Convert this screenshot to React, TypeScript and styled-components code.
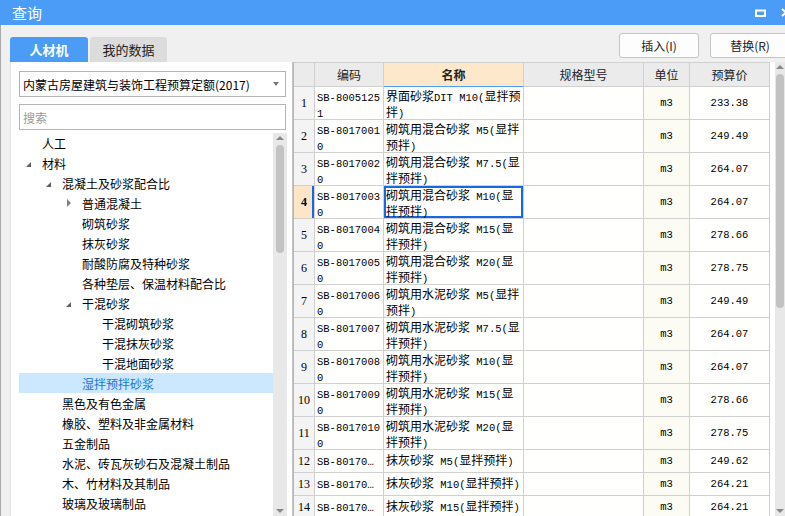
import React from "react";
import styled, { createGlobalStyle, css } from "styled-components";

const Global = createGlobalStyle`
  html, body { margin: 0; padding: 0; background: #f0f0f0; overflow: hidden; }
  body {
    font-family: "Noto Sans CJK SC", "Noto Sans", sans-serif;
    font-size: 12px;
    color: #000;
  }
  * { box-sizing: border-box; }
`;

const BLUE = "#4a9cf6";

const Window = styled.div`
  width: 785px;
  height: 516px;
  display: flex;
  flex-direction: column;
  overflow: hidden;
  background: #f0f0f0;
`;

const TitleBar = styled.div`
  height: 25px;
  flex: none;
  background: ${BLUE};
  display: flex;
  align-items: center;
  padding-left: 12px;
  color: #fff;
  font-size: 15px;
`;

const TitleText = styled.span`
  flex: 1;
  line-height: 25px;
`;

const WinButtons = styled.div`
  display: flex;
  align-items: center;
  gap: 15px;
  margin-right: -6px;
  height: 100%;
`;

const Content = styled.div`
  flex: 1;
  min-height: 0;
  display: flex;
  flex-direction: column;
  border-left: 1px solid #a8a8a8;
`;

const Toolbar = styled.div`
  height: 37px;
  flex: none;
  display: flex;
  padding-left: 9px;
`;

const Tabs = styled.div`
  display: flex;
  align-self: flex-end;
  gap: 2px;
`;

const Tab = styled.div<{ $active?: boolean }>`
  width: ${(p) => (p.$active ? 78 : 77)}px;
  height: 25px;
  border-radius: 3px 3px 0 0;
  display: flex;
  align-items: center;
  justify-content: center;
  font-size: 13px;
  ${(p) =>
    p.$active
      ? css`
          background: ${BLUE};
          color: #fff;
          font-weight: bold;
        `
      : css`
          background: #dcdcdc;
          color: #222;
        `}
`;

const Actions = styled.div`
  margin-left: auto;
  margin-top: 8px;
  margin-right: -5px;
  display: flex;
  gap: 11px;
  align-self: flex-start;
`;

const ActionButton = styled.button`
  width: 80px;
  height: 25px;
  border: 1px solid #c4c4c4;
  border-radius: 3px;
  background: #fdfdfd;
  font-family: "Noto Sans CJK SC", sans-serif;
  font-size: 12px;
  color: #222;
  padding: 0;
`;

const Body = styled.div`
  flex: 1;
  min-height: 0;
  display: flex;
  padding-left: 9px;
`;

const LeftPanel = styled.div`
  width: 283px;
  flex: none;
  background: #fff;
  border-right: 1px solid #c4c4c4;
  border-left: 1px solid #e2e2e2;
  padding: 9px 6px 0 8px;
  display: flex;
  flex-direction: column;
`;

const Select = styled.div`
  height: 26px;
  border: 1px solid #b4b4b4;
  display: flex;
  align-items: center;
  padding: 0 6px 0 3px;
  font-size: 12px;
`;

const SelectText = styled.span`
  flex: 1;
  white-space: nowrap;
`;

const Caret = styled.span`
  width: 0;
  height: 0;
  border-left: 3px solid transparent;
  border-right: 3px solid transparent;
  border-top: 4px solid #777;
`;

const Search = styled.div`
  margin-top: 7px;
  height: 26px;
  border: 1px solid #b4b4b4;
  display: flex;
  align-items: center;
  padding-left: 3px;
  color: #9a9a9a;
  font-size: 12px;
`;

const TreeBox = styled.div`
  margin-top: 3px;
  flex: 1;
  min-height: 0;
  display: flex;
`;

const TreeList = styled.div`
  width: 254px;
  flex: none;
`;

const TreeRow = styled.div<{ $selected?: boolean }>`
  height: 20px;
  display: flex;
  align-items: center;
  white-space: nowrap;
  font-size: 12px;
  ${(p) =>
    p.$selected &&
    css`
      background: #cce8ff;
      color: #1a73d9;
    `}
`;

const Indent = styled.span<{ $level: number }>`
  width: ${(p) => 7 + p.$level * 20}px;
  flex: none;
`;

const ArrowBox = styled.span`
  width: 16px;
  flex: none;
  display: flex;
  align-items: center;
`;

const Expanded = styled.span`
  width: 0;
  height: 0;
  margin-top: 2px;
  border-bottom: 5px solid #606060;
  border-left: 5px solid transparent;
`;

const Collapsed = styled.span`
  width: 0;
  height: 0;
  margin-left: 1px;
  border-left: 4px solid #808080;
  border-top: 4px solid transparent;
  border-bottom: 4px solid transparent;
`;

const ScrollTrack = styled.div<{ $w: number }>`
  width: ${(p) => p.$w}px;
  flex: none;
  background: #e8e8e8;
  display: flex;
  flex-direction: column;
  align-items: center;
  position: relative;
`;

const ArrowUp = styled.span`
  margin-top: 3px;
  width: 0;
  height: 0;
  border-left: 4px solid transparent;
  border-right: 4px solid transparent;
  border-bottom: 4px solid #888;
`;

const ArrowDown = styled.span`
  margin-top: auto;
  margin-bottom: 3px;
  width: 0;
  height: 0;
  border-left: 4px solid transparent;
  border-right: 4px solid transparent;
  border-top: 4px solid #888;
`;

const Thumb = styled.div<{ $h: number; $top: number }>`
  margin-top: ${(p) => p.$top}px;
  width: 8px;
  height: ${(p) => p.$h}px;
  border-radius: 4px;
  background: #c2c2c2;
`;

const GridArea = styled.div`
  flex: 1;
  min-width: 0;
  display: flex;
  background: #fff;
`;

const Table = styled.div`
  width: 477px;
  flex: none;
  border-left: 1px solid #b8b8b8;
  border-top: 1px solid #d0d0d0;
  display: flex;
  flex-direction: column;
`;

const GridGap = styled.div`
  width: 5px;
  flex: none;
`;

const Row = styled.div<{ $h: number }>`
  display: grid;
  grid-template-columns: 21px 69px 140px 120px 46px 80px;
  height: ${(p) => p.$h}px;
  flex: none;
`;

const CellBase = css`
  border-right: 1px solid #d0d0d0;
  border-bottom: 1px solid #d0d0d0;
  overflow: hidden;
  white-space: nowrap;
`;

const HeadCell = styled.div<{ $hl?: boolean }>`
  ${CellBase};
  background: ${(p) => (p.$hl ? "#fde8cb" : "#ebebeb")};
  display: flex;
  align-items: center;
  justify-content: center;
  font-size: 12px;
  color: #222;
  ${(p) =>
    p.$hl &&
    css`
      font-weight: bold;
      border-bottom-color: ${BLUE};
    `}
`;

const NumCell = styled.div<{ $sel?: boolean }>`
  ${CellBase};
  background: ${(p) => (p.$sel ? "#fde6c8" : "#f4f4f4")};
  display: flex;
  align-items: center;
  justify-content: center;
  font-family: "Liberation Serif", serif;
  font-size: 12px;
  font-weight: ${(p) => (p.$sel ? "bold" : "normal")};
  ${(p) => p.$sel && css`box-shadow: inset -2px 0 0 #1668e3;`}
`;

const TextCell = styled.div<{ $single?: boolean; $sel?: boolean }>`
  ${CellBase};
  background: #fffffd;
  padding: ${(p) => (p.$single ? "0 0 0 2px" : "2px 0 0 2px")};
  line-height: 14px;
  font-size: 12px;
  display: flex;
  flex-direction: column;
  justify-content: ${(p) => (p.$single ? "center" : "flex-start")};
  ${(p) => p.$sel && css`box-shadow: inset 0 0 0 2px #1668e3;`}
`;

const CenterCell = styled.div<{ $cream?: boolean }>`
  ${CellBase};
  background: ${(p) => (p.$cream ? "#fcfcf4" : "#fffffd")};
  display: flex;
  align-items: center;
  justify-content: center;
`;

const Latin = styled.span`
  font-family: "Liberation Mono", "DejaVu Sans Mono", monospace;
  font-size: 10.5px;
`;

const Mixed = ({ text }: { text: string }) => {
  const parts = text.split(/([\x00-\x7F…]+)/).filter((s) => s.length);
  return (
    <span>
      {parts.map((p, i) =>
        /^[\x00-\x7F…]+$/.test(p) ? <Latin key={i}>{p}</Latin> : <React.Fragment key={i}>{p}</React.Fragment>
      )}
    </span>
  );
};

type TreeItem = { t: string; l: number; a?: "e" | "c"; s?: boolean };
const tree: TreeItem[] = [
  { t: "人工", l: 0 },
  { t: "材料", l: 0, a: "e" },
  { t: "混凝土及砂浆配合比", l: 1, a: "e" },
  { t: "普通混凝土", l: 2, a: "c" },
  { t: "砌筑砂浆", l: 2 },
  { t: "抹灰砂浆", l: 2 },
  { t: "耐酸防腐及特种砂浆", l: 2 },
  { t: "各种垫层、保温材料配合比", l: 2 },
  { t: "干混砂浆", l: 2, a: "e" },
  { t: "干混砌筑砂浆", l: 3 },
  { t: "干混抹灰砂浆", l: 3 },
  { t: "干混地面砂浆", l: 3 },
  { t: "湿拌预拌砂浆", l: 2, s: true },
  { t: "黑色及有色金属", l: 1 },
  { t: "橡胶、塑料及非金属材料", l: 1 },
  { t: "五金制品", l: 1 },
  { t: "水泥、砖瓦灰砂石及混凝土制品", l: 1 },
  { t: "木、竹材料及其制品", l: 1 },
  { t: "玻璃及玻璃制品", l: 1 },
  { t: "油品、化工原料及胶粘材料", l: 1 },
];

type GridRow = { code: string[]; name: string[]; price: string };
const rows: GridRow[] = [
  { code: ["SB-8005125", "1"], name: ["界面砂浆DIT M10(显拌预", "拌)"], price: "233.38" },
  { code: ["SB-8017001", "0"], name: ["砌筑用混合砂浆 M5(显拌", "预拌)"], price: "249.49" },
  { code: ["SB-8017002", "0"], name: ["砌筑用混合砂浆 M7.5(显", "拌预拌)"], price: "264.07" },
  { code: ["SB-8017003", "0"], name: ["砌筑用混合砂浆 M10(显", "拌预拌)"], price: "264.07" },
  { code: ["SB-8017004", "0"], name: ["砌筑用混合砂浆 M15(显", "拌预拌)"], price: "278.66" },
  { code: ["SB-8017005", "0"], name: ["砌筑用混合砂浆 M20(显", "拌预拌)"], price: "278.75" },
  { code: ["SB-8017006", "0"], name: ["砌筑用水泥砂浆 M5(显拌", "预拌)"], price: "249.49" },
  { code: ["SB-8017007", "0"], name: ["砌筑用水泥砂浆 M7.5(显", "拌预拌)"], price: "264.07" },
  { code: ["SB-8017008", "0"], name: ["砌筑用水泥砂浆 M10(显", "拌预拌)"], price: "264.07" },
  { code: ["SB-8017009", "0"], name: ["砌筑用水泥砂浆 M15(显", "拌预拌)"], price: "278.66" },
  { code: ["SB-8017010", "0"], name: ["砌筑用水泥砂浆 M20(显", "拌预拌)"], price: "278.75" },
  { code: ["SB-80170…"], name: ["抹灰砂浆 M5(显拌预拌)"], price: "249.62" },
  { code: ["SB-80170…"], name: ["抹灰砂浆 M10(显拌预拌)"], price: "264.21" },
  { code: ["SB-80170…"], name: ["抹灰砂浆 M15(显拌预拌)"], price: "264.21" },
];

export default function App() {
  return (
    <>
      <Global />
      <Window>
        <TitleBar>
          <TitleText>查询</TitleText>
          <WinButtons>
            <svg width="11" height="8" viewBox="0 0 11 8">
              <rect x="1" y="1.5" width="9" height="5.5" fill="none" stroke="#fff" strokeWidth="2" />
            </svg>
            <svg width="10" height="9" viewBox="0 0 10 9">
              <path d="M1 1 L9 8 M9 1 L1 8" stroke="#fff" strokeWidth="2" />
            </svg>
          </WinButtons>
        </TitleBar>
        <Content>
          <Toolbar>
            <Tabs>
              <Tab $active>人材机</Tab>
              <Tab>我的数据</Tab>
            </Tabs>
            <Actions>
              <ActionButton>插入(I)</ActionButton>
              <ActionButton>替换(R)</ActionButton>
            </Actions>
          </Toolbar>
          <Body>
            <LeftPanel>
              <Select>
                <SelectText>内蒙古房屋建筑与装饰工程预算定额(2017)</SelectText>
                <Caret />
              </Select>
              <Search>搜索</Search>
              <TreeBox>
                <TreeList>
                  {tree.map((it, i) => (
                    <TreeRow key={i} $selected={it.s}>
                      <Indent $level={it.l} />
                      <ArrowBox>
                        {it.a === "e" && <Expanded />}
                        {it.a === "c" && <Collapsed />}
                      </ArrowBox>
                      {it.t}
                    </TreeRow>
                  ))}
                </TreeList>
                <ScrollTrack $w={14}>
                  <ArrowUp />
                  <Thumb $top={5} $h={108} />
                  <ArrowDown />
                </ScrollTrack>
              </TreeBox>
            </LeftPanel>
            <GridArea>
              <Table>
                <Row $h={24}>
                  <HeadCell />
                  <HeadCell>编码</HeadCell>
                  <HeadCell $hl>名称</HeadCell>
                  <HeadCell>规格型号</HeadCell>
                  <HeadCell>单位</HeadCell>
                  <HeadCell>预算价</HeadCell>
                </Row>
                {rows.map((r, i) => {
                  const single = r.code.length === 1;
                  const sel = i === 3;
                  return (
                    <Row key={i} $h={single ? 23 : 33}>
                      <NumCell $sel={sel}>{i + 1}</NumCell>
                      <TextCell $single={single}>
                        {r.code.map((c, j) => (
                          <Mixed key={j} text={c} />
                        ))}
                      </TextCell>
                      <TextCell $single={single} $sel={sel}>
                        {r.name.map((c, j) => (
                          <Mixed key={j} text={c} />
                        ))}
                      </TextCell>
                      <CenterCell />
                      <CenterCell $cream>
                        <Latin>m3</Latin>
                      </CenterCell>
                      <CenterCell>
                        <Latin>{r.price}</Latin>
                      </CenterCell>
                    </Row>
                  );
                })}
              </Table>
              <GridGap />
              <ScrollTrack $w={10}>
                <ArrowUp />
                <Thumb $top={5} $h={234} />
                <ArrowDown />
              </ScrollTrack>
            </GridArea>
          </Body>
        </Content>
      </Window>
    </>
  );
}
